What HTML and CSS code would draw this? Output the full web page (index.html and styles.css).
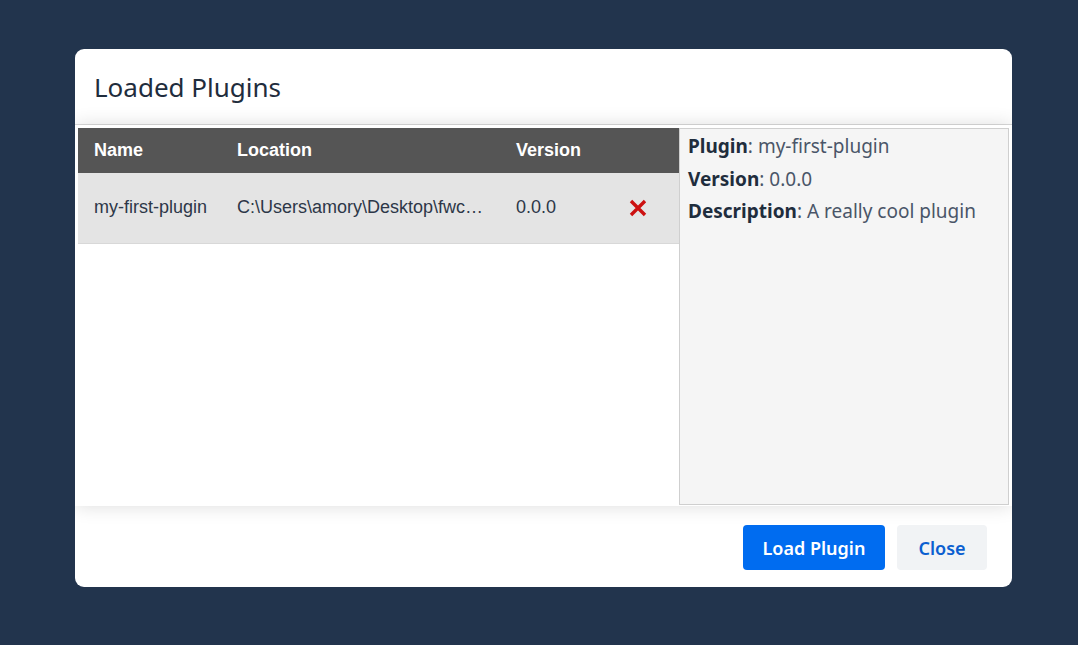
FILE: index.html
```html
<!DOCTYPE html>
<html>
<head>
<meta charset="utf-8">
<link rel="stylesheet" href="styles.css">
</head>
<body>
<div class="modal">
  <div class="modal-header">
    <h2 class="title">Loaded Plugins</h2>
  </div>
  <div class="modal-body">
    <div class="table-wrap">
      <table class="plugins">
        <colgroup>
          <col class="w-name">
          <col class="w-loc">
          <col class="w-ver">
          <col class="w-act">
        </colgroup>
        <thead>
          <tr>
            <th>Name</th>
            <th>Location</th>
            <th>Version</th>
            <th></th>
          </tr>
        </thead>
        <tbody>
          <tr>
            <td>my-first-plugin</td>
            <td><span class="ellip">C:\Users\amory\Desktop\fwc-plugin</span></td>
            <td>0.0.0</td>
            <td class="act">
              <svg class="remove" width="20" height="18" viewBox="0 0 20 18">
                <path d="M3 2 L17 16 M17 2 L3 16" stroke="#cc1111" stroke-width="3.4" fill="none"/>
              </svg>
            </td>
          </tr>
        </tbody>
      </table>
    </div>
    <div class="details">
      <div class="line"><b>Plugin</b>: my-first-plugin</div>
      <div class="line"><b>Version</b>: 0.0.0</div>
      <div class="line"><b>Description</b>: A really cool plugin</div>
    </div>
  </div>
  <div class="modal-footer">
    <button class="btn btn-primary">Load Plugin</button>
    <button class="btn btn-light">Close</button>
  </div>
</div>
</body>
</html>
```
FILE: styles.css
```css
html, body {
  margin: 0;
  padding: 0;
}
body {
  background: #22344d;
  width: 1078px;
  height: 645px;
  overflow: hidden;
  font-family: "Noto Sans", "Open Sans", sans-serif;
}
.modal {
  margin: 49px 0 0 75px;
  width: 937px;
  height: 538px;
  background: #fff;
  border-radius: 9px;
  display: flex;
  flex-direction: column;
  overflow: hidden;
}
.modal-header {
  height: 76px;
  box-sizing: border-box;
  padding: 0 19px;
  display: flex;
  align-items: center;
  border-bottom: 1px solid #dcdcdc;
}
.title {
  margin: 0;
  font-size: 26px;
  font-weight: 400;
  color: #1f2d3d;
  padding-top: 1px;
}
.modal-body {
  height: 381px;
  box-sizing: border-box;
  padding: 3px 3px 1px 3px;
  display: flex;
  box-shadow: 0 0 18px rgba(0, 0, 0, 0.14);
  position: relative;
  z-index: 1;
  background: #fff;
}
.table-wrap {
  width: 601px;
  flex: none;
}
.plugins {
  width: 601px;
  border-collapse: collapse;
  font-family: "Liberation Sans", Arial, sans-serif;
  font-size: 18px;
  table-layout: fixed;
}
.w-name { width: 143px; }
.w-loc { width: 279px; }
.w-ver { width: 110px; }
.w-act { width: 69px; }
.plugins th {
  background: #555555;
  color: #fff;
  font-weight: 700;
  text-align: left;
  height: 44px;
  padding: 0 0 1px 16px;
  vertical-align: middle;
}
.plugins td {
  background: #e4e4e4;
  color: #2d3748;
  height: 70px;
  padding: 0 0 0 16px;
  border-bottom: 1px solid #d8d8d8;
  vertical-align: middle;
  box-sizing: border-box;
}
.ellip {
  display: block;
  white-space: nowrap;
  overflow: hidden;
  text-overflow: ellipsis;
  padding-right: 16px;
}
.plugins td.act {
  padding: 0 0 0 18px;
}
.remove {
  display: block;
}
.details {
  flex: 1;
  background: #f5f5f5;
  border: 1px solid #cfcfcf;
  padding: 1px 8px;
  font-size: 19px;
  color: #4a5568;
  line-height: 32.5px;
}
.details b {
  color: #1f2d3d;
  font-weight: 700;
}
.modal-footer {
  flex: 1;
  display: flex;
  justify-content: flex-end;
  align-items: flex-start;
  gap: 12px;
  padding: 19px 25px 0 0;
}
.btn {
  height: 45px;
  border: none;
  border-radius: 4px;
  font-family: "Noto Sans", "Open Sans", sans-serif;
  font-size: 18px;
  font-weight: 600;
  padding: 1px 0 0;
}
.btn-primary {
  background: #006cf0;
  color: #fff;
  width: 142px;
}
.btn-light {
  background: #f1f3f5;
  color: #0b5fd0;
  width: 90px;
}
```
